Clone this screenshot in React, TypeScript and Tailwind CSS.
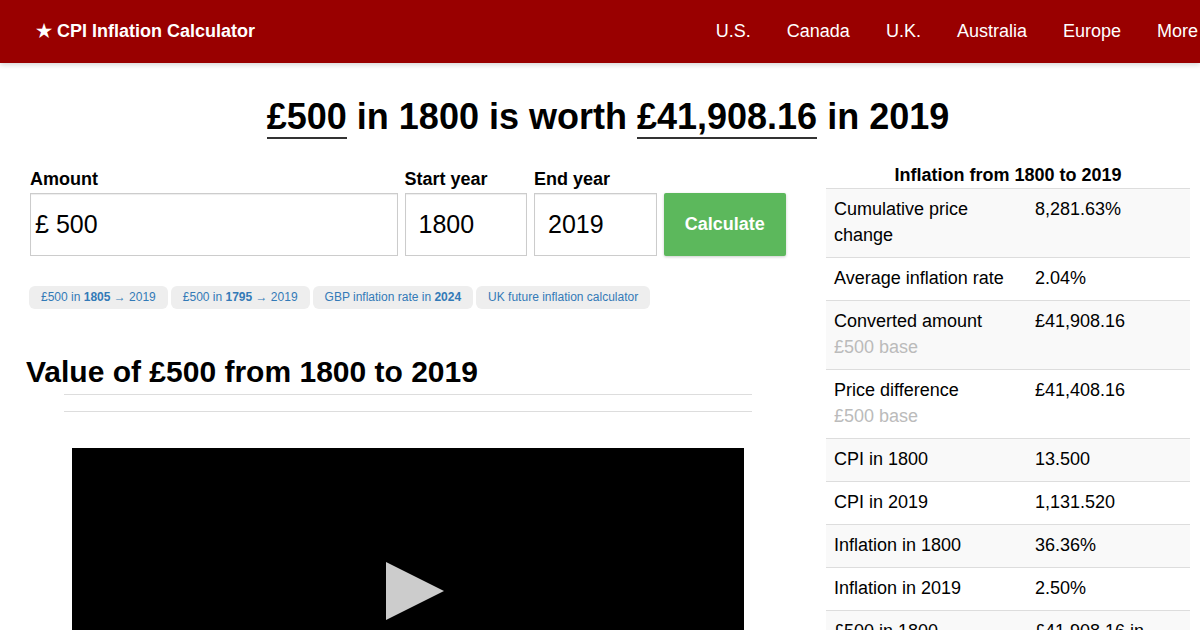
const regions = ["U.S.", "Canada", "U.K.", "Australia", "Europe", "More"];

const shortcuts = [
  { before: "£500 in ", year: "1805", after: " → 2019" },
  { before: "£500 in ", year: "1795", after: " → 2019" },
  { before: "GBP inflation rate in ", year: "2024", after: "" },
  { before: "UK future inflation calculator", year: "", after: "" },
];

const facts = [
  { name: "Cumulative price change", value: "8,281.63%" },
  { name: "Average inflation rate", value: "2.04%" },
  { name: "Converted amount", note: "£500 base", value: "£41,908.16" },
  { name: "Price difference", note: "£500 base", value: "£41,408.16" },
  { name: "CPI in 1800", value: "13.500" },
  { name: "CPI in 2019", value: "1,131.520" },
  { name: "Inflation in 1800", value: "36.36%" },
  { name: "Inflation in 2019", value: "2.50%" },
  { name: "£500 in 1800", value: "£41,908.16 in 2019" },
];

const fieldBox =
  "h-[63px] w-full border border-[#ccc] bg-white shadow-[inset_0_1px_1px_rgba(0,0,0,0.075)]";

function Header() {
  return (
    <header className="flex h-[63px] items-center justify-between bg-[#990000] pr-0.5 pb-0.5 pl-9 text-[18px] leading-[26px] text-white shadow-[0_2px_5px_rgba(0,0,0,0.16)]">
      <a href="#" className="font-bold">
        ★ CPI Inflation Calculator
      </a>
      <nav className="flex gap-9">
        {regions.map((region) => (
          <a key={region} href="#">
            {region}
          </a>
        ))}
      </nav>
    </header>
  );
}

function YearField({ id, label, value }: { id: string; label: string; value: string }) {
  return (
    <div>
      <label htmlFor={id} className="block text-[18px] leading-[26px] font-bold">
        {label}
      </label>
      <input id={id} defaultValue={value} className={`${fieldBox} mt-px px-[13px] text-[25px]`} />
    </div>
  );
}

function Calculator() {
  return (
    <form className="grid grid-cols-[3fr_1fr_1fr_1fr] items-end gap-[7px] px-[22px]">
      <div>
        <label htmlFor="amount" className="block text-[18px] leading-[26px] font-bold">
          Amount
        </label>
        <div className={`${fieldBox} mt-px flex items-center gap-[7px] pl-1 text-[25px]`}>
          <span>£</span>
          <input id="amount" defaultValue="500" className="h-full w-full min-w-0 outline-none" />
        </div>
      </div>
      <YearField id="start" label="Start year" value="1800" />
      <YearField id="end" label="End year" value="2019" />
      <button
        type="button"
        className="h-[63px] rounded-xs bg-[#5cb85c] text-[18px] font-bold text-white shadow-[0_1px_3px_rgba(0,0,0,0.2)]"
      >
        Calculate
      </button>
    </form>
  );
}

function Shortcuts() {
  return (
    <div className="mt-[30px] flex flex-wrap gap-[3px] pl-[21px]">
      {shortcuts.map((item) => (
        <a
          key={item.before + item.year}
          href="#"
          className="rounded-md bg-[#eee] px-3 py-[3px] text-[12px] leading-[17px] text-[#337ab7]"
        >
          {item.before}
          <b>{item.year}</b>
          {item.after}
        </a>
      ))}
    </div>
  );
}

function Facts() {
  return (
    <table className="w-full table-fixed text-[18px] leading-[26px]">
      <caption className="font-bold">Inflation from 1800 to 2019</caption>
      <colgroup>
        <col className="w-[201px]" />
        <col />
      </colgroup>
      <tbody>
        {facts.map((fact) => (
          <tr key={fact.name} className="border-t border-[#ddd] align-top odd:bg-[#f9f9f9]">
            <td className="px-2 pt-[7px] pb-[9px]">
              {fact.name}
              {fact.note && <span className="block text-[#bbb]">{fact.note}</span>}
            </td>
            <td className="px-2 pt-[7px] pb-[9px]">{fact.value}</td>
          </tr>
        ))}
      </tbody>
    </table>
  );
}

export default function App() {
  return (
    <div className="overflow-x-hidden bg-white font-['Liberation_Sans',Arial,sans-serif] text-black">
      <Header />
      <main className="-mr-2 pl-2">
        <h1 className="pt-[34px] text-center text-[36px] leading-[40px] font-bold">
          <span className="border-b-2 border-[#333]">£500</span> in 1800 is worth{" "}
          <span className="border-b-2 border-[#333]">£41,908.16</span> in 2019
        </h1>
        <div className="mt-[25px] grid grid-cols-[2fr_1fr] items-start">
          <section className="pt-1">
            <Calculator />
            <Shortcuts />
            <h2 className="mt-[46px] pl-[18px] text-[30px] leading-[34px] font-bold">
              Value of £500 from 1800 to 2019
            </h2>
            <div className="mx-14 mt-[5px] h-[18px] border-y border-[#ddd]" />
            <button
              type="button"
              aria-label="Play video"
              className="mx-16 mt-9 flex h-[286px] w-[84%] items-center justify-center bg-black pl-3.5"
            >
              <svg width="58" height="58" viewBox="0 0 58 58" aria-hidden="true">
                <path d="M0 0L58 29L0 58Z" fill="#ccc" />
              </svg>
            </button>
          </section>
          <aside className="px-[18px]">
            <Facts />
          </aside>
        </div>
      </main>
    </div>
  );
}
